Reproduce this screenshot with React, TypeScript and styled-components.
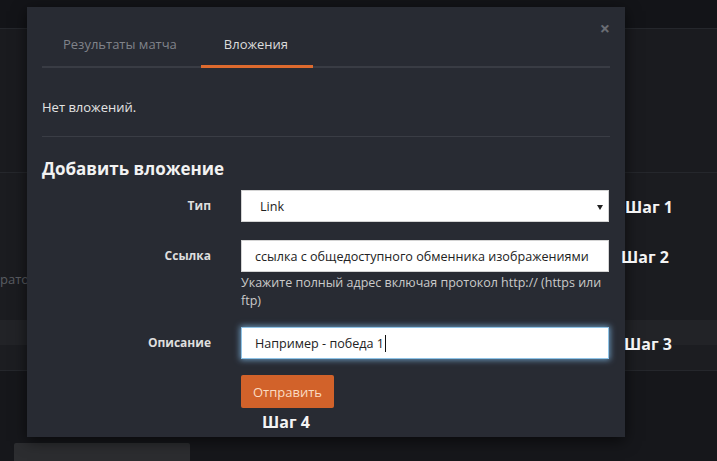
import React from 'react';
import styled, { createGlobalStyle } from 'styled-components';

const GlobalStyle = createGlobalStyle`
    html, body {
        margin: 0;
        padding: 0;
        background: #141519;
    }
    body {
        font-family: 'Open Sans', 'Noto Sans', sans-serif;
        overflow: hidden;
    }
`;

interface IField {
    readonly label: string;
    readonly value: string;
    readonly step: string;
    readonly stepShift: number;
    readonly kind: 'select' | 'text' | 'focus';
    readonly help?: string;
}

const fields: IField[] = [
    { label: 'Тип', value: 'Link', step: 'Шаг 1', stepShift: 16, kind: 'select' },
    {
        label: 'Ссылка',
        value: 'ссылка с общедоступного обменника изображениями',
        step: 'Шаг 2',
        stepShift: 12,
        kind: 'text',
        help: 'Укажите полный адрес включая протокол http:// (https или ftp)',
    },
    { label: 'Описание', value: 'Например - победа 1', step: 'Шаг 3', stepShift: 15, kind: 'focus' },
];

export default function App() {
    return (
        <>
            <GlobalStyle />
            <Page>
                <Backdrop>
                    <Band $h={28} $tone="#131418" />
                    <Band $h={144} $tone="#1a1b1f" $line />
                    <Band $h={148} $tone="#1b1c20" $line>
                        <GhostText>ратор</GhostText>
                    </Band>
                    <Band $h={25} $tone="#222327" />
                    <Band $h={25} $tone="#1c1d21" />
                    <Band $h={91} $tone="#16171b" $line>
                        <GhostCard />
                    </Band>
                </Backdrop>

                <Modal>
                    <Close>×</Close>
                    <TabList>
                        <Tab>Результаты матча</Tab>
                        <Tab $active>Вложения</Tab>
                    </TabList>

                    <Empty>Нет вложений.</Empty>
                    <Divider />
                    <Title>Добавить вложение</Title>

                    <Form>
                        {fields.map((f) => (
                            <Row key={f.label}>
                                <Label>{f.label}</Label>
                                <div>
                                    <Box $focus={f.kind === 'focus'} $select={f.kind === 'select'}>
                                        {f.value}
                                        {f.kind === 'focus' && <Cursor />}
                                        {f.kind === 'select' && <Caret />}
                                    </Box>
                                    {f.help && <Help>{f.help}</Help>}
                                </div>
                                <Step $shift={f.stepShift}>{f.step}</Step>
                            </Row>
                        ))}
                        <SubmitRow>
                            <span />
                            <SubmitCol>
                                <Submit type="button">Отправить</Submit>
                                <StepBelow>Шаг 4</StepBelow>
                            </SubmitCol>
                        </SubmitRow>
                    </Form>
                </Modal>
            </Page>
        </>
    );
}

const Page = styled.div`
    position: relative;
    width: 717px;
    height: 461px;
    overflow: hidden;
`;

const Backdrop = styled.div`
    display: flex;
    flex-direction: column;
    height: 100%;
`;

const Band = styled.div<{ $h: number; $tone: string; $line?: boolean }>`
    position: relative;
    height: ${({ $h }) => $h}px;
    background: ${({ $tone }) => $tone};
    border-top: ${({ $line }) => ($line ? '1px solid #25272c' : 'none')};
    box-sizing: border-box;
    display: flex;
    align-items: center;
`;

const GhostText = styled.span`
    font-size: 13px;
    color: #5a5c62;
    margin-left: 0;
    margin-top: 64px;
`;

const GhostCard = styled.div`
    align-self: flex-end;
    width: 176px;
    height: 18px;
    margin-left: 14px;
    background: #2c2d30;
    border-radius: 2px 2px 0 0;
`;

const Modal = styled.div`
    position: absolute;
    left: 27px;
    top: 7px;
    width: 598px;
    height: 430px;
    box-sizing: border-box;
    padding: 19px 15px 0;
    background: #282b33;
    box-shadow: 0 4px 14px rgba(0, 0, 0, 0.6);
    color: #e2e2e2;
`;

const Close = styled.span`
    position: absolute;
    top: 12px;
    right: 15px;
    font-size: 18px;
    font-weight: 700;
    line-height: 18px;
    color: #6a6d74;
`;

const TabList = styled.div`
    display: flex;
    gap: 2px;
    border-bottom: 2px solid #393c44;
`;

const Tab = styled.div<{ $active?: boolean }>`
    padding: 9px ${({ $active }) => ($active ? '25px 12px 23px' : '22px 12px 21px')};
    margin-bottom: -2px;
    font-size: 13px;
    line-height: 18px;
    color: ${({ $active }) => ($active ? '#dcdcdc' : '#80838a')};
    border-bottom: 3px solid ${({ $active }) => ($active ? '#dd6a2e' : 'transparent')};
`;

const Empty = styled.p`
    margin: 30px 0 0;
    font-size: 13px;
    line-height: 18px;
    color: #e4e4e4;
`;

const Divider = styled.hr`
    margin: 20px 0 0;
    border: none;
    border-top: 1px solid #3a3d45;
`;

const Title = styled.h3`
    margin: 20px 0 0;
    font-size: 17px;
    line-height: 24px;
    font-weight: 700;
    color: #f2f2f2;
`;

const Form = styled.div`
    display: flex;
    flex-direction: column;
    gap: 17px;
    margin-top: 9px;
`;

const Row = styled.div`
    display: grid;
    grid-template-columns: 169px 368px max-content;
    column-gap: 30px;
    align-items: start;
`;

const SubmitRow = styled(Row)`
    margin-top: -2px;
`;

const Label = styled.label`
    text-align: right;
    font-size: 12px;
    font-weight: 700;
    line-height: 32px;
    color: #dedede;
`;

const Box = styled.div<{ $focus?: boolean; $select?: boolean }>`
    position: relative;
    height: 32px;
    box-sizing: border-box;
    padding: 0 ${({ $select }) => ($select ? 18 : 13)}px;
    display: flex;
    align-items: center;
    background: #fff;
    font-size: 12.6px;
    color: #222;
    border: 1px solid ${({ $focus }) => ($focus ? '#8fc3e6' : '#d4d4d4')};
    box-shadow: ${({ $focus }) => ($focus ? '0 0 6px 1px rgba(130, 190, 235, 0.75)' : 'none')};
    white-space: nowrap;
`;

const Cursor = styled.span`
    display: inline-block;
    width: 1px;
    height: 17px;
    margin-left: 1px;
    background: #111;
`;

const Caret = styled.span`
    position: absolute;
    right: 5px;
    top: 14px;
    border-left: 3px solid transparent;
    border-right: 3px solid transparent;
    border-top: 5px solid #222;
`;

const Help = styled.div`
    margin-top: 2px;
    font-size: 12.5px;
    line-height: 18px;
    color: #cacaca;
`;

const Step = styled.span<{ $shift: number }>`
    margin-left: ${({ $shift }) => $shift - 30}px;
    font-size: 16px;
    font-weight: 700;
    line-height: 32px;
    margin-top: 1px;
    color: #f4f4f4;
`;

const SubmitCol = styled.div`
    display: flex;
    flex-direction: column;
    align-items: flex-start;
`;

const Submit = styled.button`
    height: 33px;
    padding: 0 12px;
    border: none;
    border-radius: 2px;
    background: #d2622a;
    color: #fbdcc2;
    font-family: 'Open Sans', 'Noto Sans', sans-serif;
    font-size: 13px;
`;

const StepBelow = styled.span`
    margin: 3px 0 0 21px;
    font-size: 16px;
    font-weight: 700;
    line-height: 22px;
    color: #f4f4f4;
`;
